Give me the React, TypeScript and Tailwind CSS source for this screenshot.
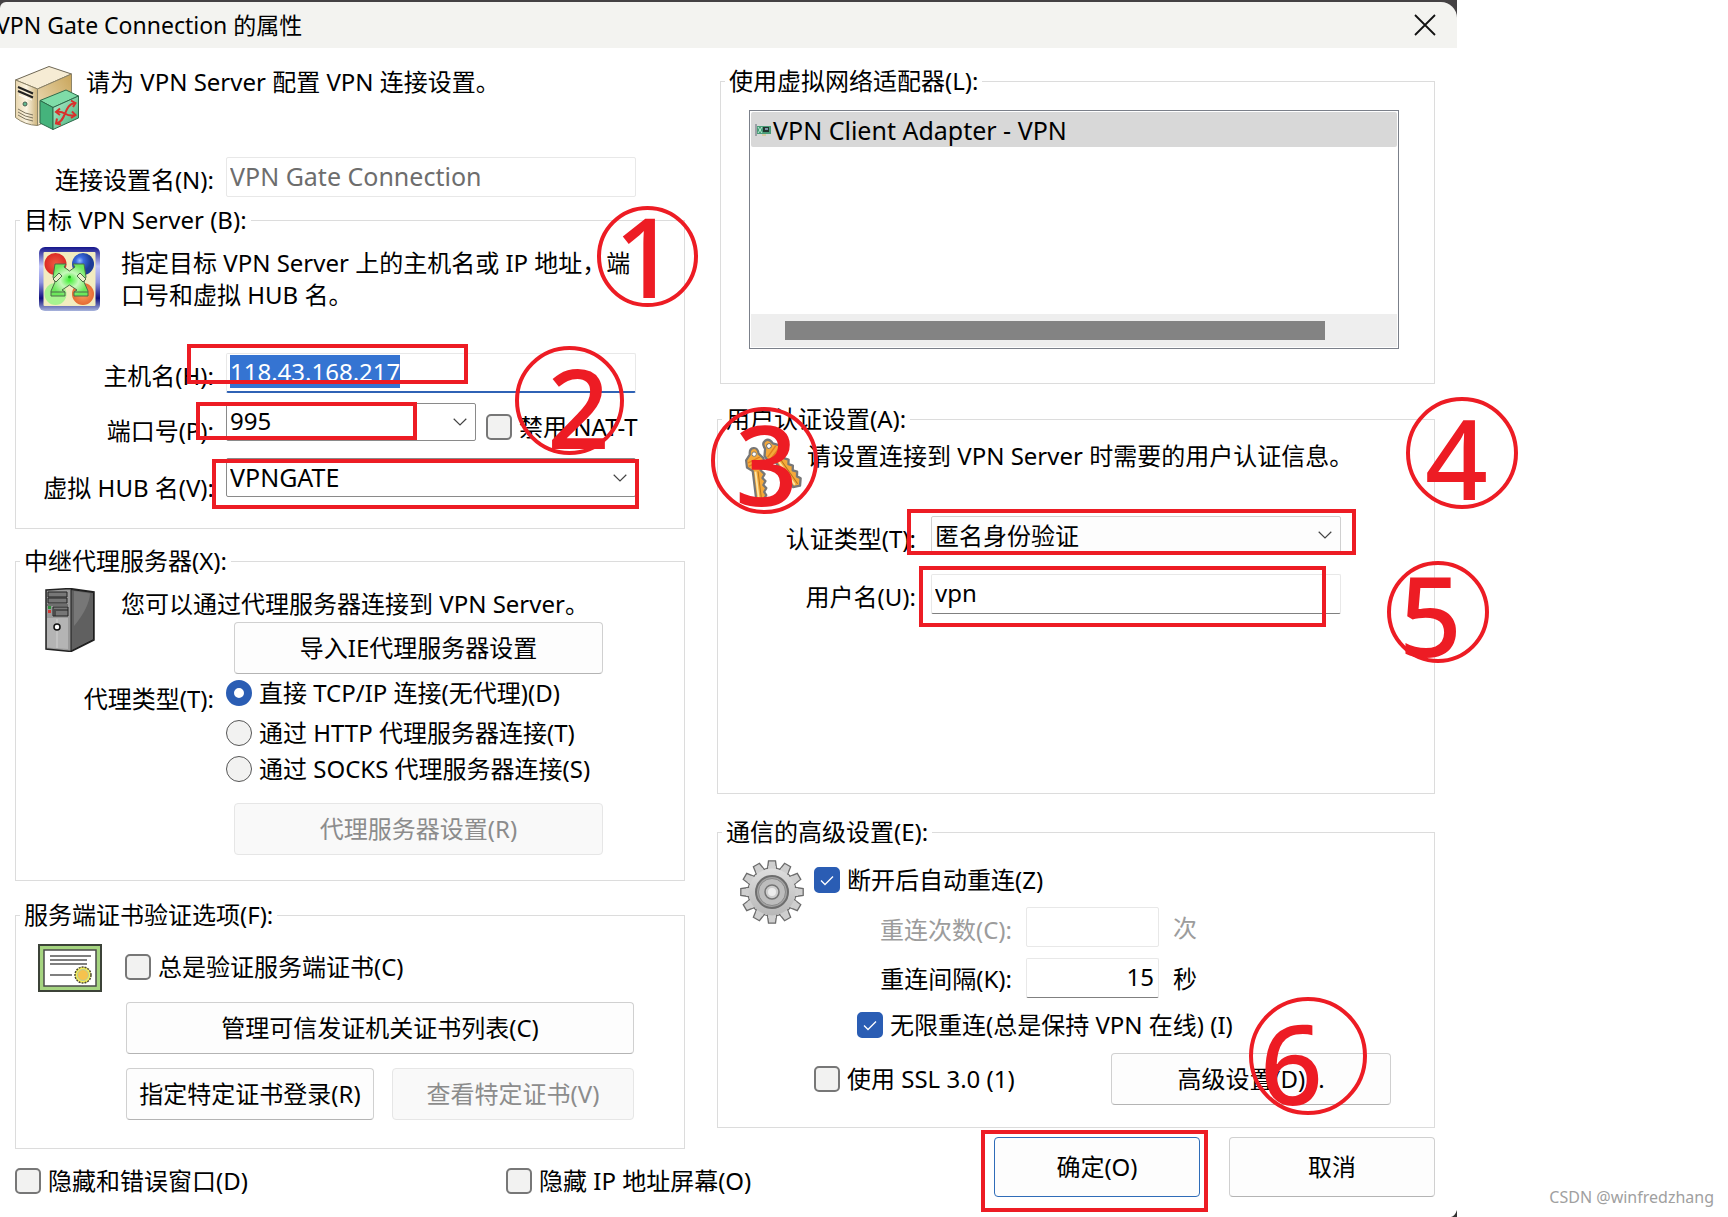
import { useEffect, useRef, useState } from "react";
import type { ReactNode } from "react";
import clsx from "clsx";

const DialogFont =
  "font-['Noto_Sans','Noto_Sans_CJK_SC',sans-serif] text-2xl leading-8 text-black";

interface GroupProps {
  title: string;
  className?: string;
  children: ReactNode;
}

function Group({ title, className, children }: GroupProps) {
  return (
    <fieldset className={clsx("min-w-0 border border-[#dcdcdc]", className)}>
      <legend className="ml-1 px-1 leading-8 whitespace-nowrap">{title}</legend>
      {children}
    </fieldset>
  );
}

interface CheckProps {
  label: string;
  defaultChecked?: boolean;
  className?: string;
}

function Check({ label, defaultChecked = false, className }: CheckProps) {
  return (
    <label className={clsx("flex h-[26px] items-center gap-[7px] whitespace-nowrap", className)}>
      <span className="grid size-[26px] shrink-0 place-items-center">
        <input
          type="checkbox"
          defaultChecked={defaultChecked}
          className="peer size-[26px] appearance-none rounded-[5px] border-2 border-[#777] bg-[#f2f2f1] [grid-area:1/1] checked:border-[#2a5db4] checked:bg-[#2a5db4]"
        />
        <svg
          viewBox="0 0 26 26"
          className="pointer-events-none size-[26px] opacity-0 [grid-area:1/1] peer-checked:opacity-100"
        >
          <path d="M7 13.5 11 17.5 19 9.5" fill="none" stroke="#fff" strokeWidth="1.3" />
        </svg>
      </span>
      {label}
    </label>
  );
}

interface RadioProps {
  label: string;
  checked: boolean;
  onChange: () => void;
  className?: string;
}

function Radio({ label, checked, onChange, className }: RadioProps) {
  return (
    <label className={clsx("flex h-[26px] items-center gap-[7px] whitespace-nowrap", className)}>
      <input
        type="radio"
        name="proxy"
        checked={checked}
        onChange={onChange}
        className="size-[26px] shrink-0 appearance-none rounded-full border border-[#555] bg-[#f2f2f1] checked:border-8 checked:border-[#2a5db4] checked:bg-white"
      />
      {label}
    </label>
  );
}

interface SelectProps {
  id: string;
  options: string[];
  className?: string;
  selectClassName?: string;
}

function Select({ id, options, className, selectClassName }: SelectProps) {
  return (
    <div className={clsx("relative", className)}>
      <select
        id={id}
        className={clsx(
          "block h-full w-full appearance-none rounded-xs border pl-[3px] leading-8 outline-none",
          selectClassName ?? "border-[#8a8a8a] bg-white pb-0.5",
        )}
      >
        {options.map((option) => (
          <option key={option}>{option}</option>
        ))}
      </select>
      <svg
        viewBox="0 0 14 8"
        className="pointer-events-none absolute top-1/2 right-[9px] h-2 w-3.5 -translate-y-1/2"
      >
        <path d="M.7.8 7 7 13.3.8" fill="none" stroke="#444" strokeWidth="1.2" />
      </svg>
    </div>
  );
}

interface PushButtonProps {
  children: ReactNode;
  disabled?: boolean;
  primary?: boolean;
  className?: string;
}

function PushButton({ children, disabled, primary, className }: PushButtonProps) {
  return (
    <button
      type="button"
      disabled={disabled}
      className={clsx(
        "rounded-[4px] border whitespace-nowrap",
        disabled && "border-[#e6e6e6] bg-[#f9f9f9] text-[#8c8c8c]",
        primary && "border-[#2f6cb8] bg-[#fdfdfd]",
        !disabled && !primary && "border-[#d0d0d0] border-b-[#b4b4b4] bg-[#fdfdfd]",
        className,
      )}
    >
      {children}
    </button>
  );
}

function ServerIcon() {
  return (
    <svg viewBox="0 0 64 64" className="size-16 shrink-0">
      <defs>
        <linearGradient id="case-front" x1="0" x2="1">
          <stop offset="0" stopColor="#e8d6ae" />
          <stop offset=".5" stopColor="#fbf4e2" />
          <stop offset="1" stopColor="#cdb37a" />
        </linearGradient>
        <linearGradient id="case-side" x1="0" x2="1" y1="1" y2="0">
          <stop offset="0" stopColor="#efe2c2" />
          <stop offset="1" stopColor="#c9a55a" />
        </linearGradient>
        <linearGradient id="box-front" x1="0" x2="1" y1="0" y2="1">
          <stop offset="0" stopColor="#b8f0d0" />
          <stop offset="1" stopColor="#3fae76" />
        </linearGradient>
      </defs>
      <path d="M.5 14 34 .5 56.5 8 22.5 23Z" fill="#f6ecd4" stroke="#6d6654" />
      <path d="M.5 14 22.5 23V59.5Q10 59 .5 51.5Z" fill="url(#case-front)" stroke="#8d8468" />
      <path d="M22.5 23 56.5 8V44L22.5 59.5Z" fill="url(#case-side)" stroke="#8d8468" />
      <path d="M3 21 18 27.5M3 25 18 31.5" stroke="#222" strokeWidth="2" />
      <path d="M4 29 17 34" stroke="#fff" />
      <circle cx="10" cy="38" r="2" fill="#5fb890" stroke="#4b6050" />
      <path
        d="M3 43Q10 48 18 49M3 46Q10 51 18 52M3 49Q10 54 18 55"
        fill="none"
        stroke="#7c745f"
      />
      <path d="M25 34.5 51 24 63.5 30 38 41.5Z" fill="#7fdca8" stroke="#2e6b4b" />
      <path d="M25 34.5 38 41.5V63.5L25 57Z" fill="#45b37c" stroke="#2e6b4b" />
      <path d="M38 41.5 63.5 30V52L38 63.5Z" fill="url(#box-front)" stroke="#2e6b4b" />
      <g stroke="#d9302c" strokeWidth="2" fill="none">
        <path d="M41 46C51 44 50 52 60 49M42 57C51 56 49 38 60 37" />
        <path d="M45 42.5 41 46 45 49M56 34.5 60.5 37 58 41M57 45.5 60.5 49 56 52M42 52.5 41 57.5 46 58.5" />
      </g>
    </svg>
  );
}

function HubIcon() {
  return (
    <svg viewBox="0 0 64 64" className="size-16 shrink-0">
      <defs>
        <linearGradient id="hub-frame" x1="0" x2="0" y1="0" y2="1">
          <stop offset="0" stopColor="#14148a" />
          <stop offset=".3" stopColor="#c4c8fa" />
          <stop offset=".55" stopColor="#8f94e0" />
          <stop offset=".8" stopColor="#10107e" />
          <stop offset="1" stopColor="#a8b4dc" />
        </linearGradient>
        <radialGradient id="hub-blue" cx=".35" cy=".35">
          <stop offset="0" stopColor="#9cc0ff" />
          <stop offset=".35" stopColor="#3a6ae0" />
          <stop offset="1" stopColor="#1c3c96" />
        </radialGradient>
        <radialGradient id="hub-red">
          <stop offset="0" stopColor="#ee5a44" />
          <stop offset="1" stopColor="#dc2a24" />
        </radialGradient>
        <radialGradient id="hub-orange">
          <stop offset="0" stopColor="#f8a060" />
          <stop offset="1" stopColor="#e66a34" />
        </radialGradient>
        <radialGradient id="hub-cross">
          <stop offset="0" stopColor="#3cf030" />
          <stop offset=".5" stopColor="#c8f8bc" />
          <stop offset="1" stopColor="#6ce85c" />
        </radialGradient>
      </defs>
      <rect width="61" height="64" rx="6" fill="url(#hub-frame)" />
      <rect x="4.5" y="5" width="52" height="54" rx="1" fill="#f2ecc0" />
      <circle cx="16.5" cy="17" r="11" fill="url(#hub-red)" />
      <circle cx="44" cy="17" r="11" fill="url(#hub-blue)" />
      <circle cx="16.5" cy="47" r="11" fill="#a8f490" />
      <circle cx="44" cy="47" r="11" fill="url(#hub-orange)" />
      <path
        d="M16 17H27L25 20 30.5 24 36 20 34 17H45L47 30 45 35 49 44V49H35V45L38 43 30.5 38 23 43 26 45V49H12V44L16 35 14 30Z"
        fill="url(#hub-cross)"
        stroke="#4d6b48"
      />
      <path
        d="M14 32 20 26 23 29 17 35ZM38 29 41 26 47 32 44 35Z"
        fill="#e8f0c8"
        stroke="#4d6b48"
      />
      <path d="M12 45H26M35 45H49" stroke="#4d6b48" />
      <circle cx="30.5" cy="30" r="1.5" fill="#1fae1c" />
    </svg>
  );
}

function TowerIcon() {
  return (
    <svg viewBox="0 0 64 64" className="size-16 shrink-0">
      <path d="M7 2 31 .5 55 4V52L32 63.5 7 61Z" fill="#9a9a9a" stroke="#222" strokeWidth="1.5" />
      <path d="M32 1.5 54.5 4.5V51.5L32 63Z" fill="#606060" stroke="#1c1c1c" />
      <path d="M35 3 51 5.5Q50 20 35 38Z" fill="#777" />
      <path d="M8 30H29V61L8 59.5Z" fill="#b4b4b4" />
      <path d="M18 31V60" stroke="#d0d0d0" />
      <path d="M9 4H28V9H9ZM9 10H28V15H9Z" fill="#777" stroke="#222" />
      <path d="M8 17H29" stroke="#444" />
      <path d="M14 19H29V28H14ZM17 22H29M16 28V21" fill="#777" stroke="#222" />
      <rect x="9" y="18" width="3" height="3" fill="#2f8f3c" />
      <rect x="9" y="22" width="3" height="3" fill="#d43a34" />
      <circle cx="18" cy="39" r="3" fill="#fff" stroke="#111" strokeWidth="1.5" />
    </svg>
  );
}

function CertificateIcon() {
  return (
    <svg viewBox="0 0 64 48" className="h-12 w-16 shrink-0">
      <rect x="1" y="1" width="62" height="46" fill="#a5d480" stroke="#3c4338" strokeWidth="2" />
      <rect x="6" y="6" width="52" height="36" fill="#fff" stroke="#4a4a4a" strokeWidth="1.5" />
      <path d="M12 12H53M12 16H49M12 20H49M12 31H34" stroke="#555" strokeWidth="1.3" />
      <circle cx="45" cy="31" r="8" fill="#f4ee5a" stroke="#4c4a30" strokeWidth="1.5" strokeDasharray="2 1" />
      <circle cx="45" cy="31" r="5.5" fill="#f6c24e" stroke="#b8cc9c" />
    </svg>
  );
}

function KeysIcon() {
  const key = (
    <>
      <path
        d="M-10-11-5-17Q-5-24 0-24T5-17L10-11V-3L5 2 9 7 6 11 9 15 6 19 9 23 6 27 8 31 3 37-4 34V2L-10-3Z"
        fill="#f5a93a"
        stroke="#777"
        strokeWidth="2.5"
        strokeLinejoin="round"
      />
      <path d="M-8-8 6-13M-8-4 8-9" stroke="#e07f1e" strokeWidth="1.5" />
      <path d="M-1 3V33" stroke="#fde7a8" strokeWidth="2" />
      <path d="M2 3V34" stroke="#b0701c" />
      <circle cy="-17" r="2.5" fill="#fff" stroke="#777" />
    </>
  );
  return (
    <svg viewBox="0 0 64 64" className="size-16 shrink-0">
      <g transform="translate(38 21) rotate(-35) scale(.93)">{key}</g>
      <g transform="translate(16 31) rotate(-7) scale(.88)">{key}</g>
    </svg>
  );
}

function GearIcon() {
  const teeth = Array.from({ length: 12 }, (_, i) => i * 30);
  return (
    <svg viewBox="0 0 64 64" className="size-16 shrink-0">
      <defs>
        <linearGradient id="gear-metal" x1="0" x2="0" y1="0" y2="1">
          <stop offset="0" stopColor="#dedede" />
          <stop offset="1" stopColor="#b8b8b8" />
        </linearGradient>
      </defs>
      {teeth.map((angle) => (
        <path
          key={angle}
          d="M27 12 28.5.8H35.5L37 12"
          fill="#cfcfcf"
          stroke="#6c6c6c"
          strokeWidth="1.3"
          transform={`rotate(${angle} 32 32)`}
        />
      ))}
      <circle cx="32" cy="32" r="24" fill="none" stroke="#6c6c6c" strokeWidth="1.3" />
      {teeth.map((angle) => (
        <path
          key={angle}
          d="M28.3 6H35.7L36.6 13H27.4Z"
          fill="#cfcfcf"
          transform={`rotate(${angle} 32 32)`}
        />
      ))}
      <circle cx="32" cy="32" r="23.4" fill="url(#gear-metal)" />
      <circle cx="32" cy="32" r="16" fill="#a4a4a4" stroke="#6e6e6e" strokeWidth="2" />
      <circle cx="32" cy="32" r="13.5" fill="#bdbdbd" stroke="#8a8a8a" />
      <circle cx="32" cy="32" r="7" fill="#cdcdcd" stroke="#747474" strokeWidth="1.5" />
      <circle cx="32" cy="32" r="4" fill="#ececec" />
    </svg>
  );
}

function AdapterIcon() {
  return (
    <svg viewBox="0 0 16 16" className="size-4 shrink-0">
      <path d="M1 2V14" stroke="#8a8f96" strokeWidth="1.5" />
      <path d="M2 4H16V12H2Z" fill="#4a9c78" />
      <path d="M3 5 7 11M7 5 3 11" stroke="#b8ecd4" />
      <path d="M8 5H14V10H8Z" fill="#22352e" />
      <path d="M10 7H13" stroke="#9fb4d8" strokeWidth="1.5" />
      <path d="M7 13H11" stroke="#d8c890" strokeWidth="1.5" />
    </svg>
  );
}

// Highlight frames and numbered marks drawn over the dialog
function Callouts() {
  const frame = "absolute border-4 border-[#ed1c24]";
  const ring = "absolute rounded-full border-4 border-[#ed1c24]";
  const digit = "absolute text-[110px] leading-none font-medium text-[#ed1c24]";
  return (
    <div className="pointer-events-none absolute inset-0">
      <div className={clsx(frame, "top-[344px] left-[187px] h-10 w-[281px]")} />
      <div className={clsx(frame, "top-[402px] left-[196px] h-[38px] w-[221px]")} />
      <div className={clsx(frame, "top-[459px] left-[212px] h-[50px] w-[427px]")} />
      <div className={clsx(frame, "top-[509px] left-[907px] h-[46px] w-[449px]")} />
      <div className={clsx(frame, "top-[566px] left-[919px] h-[61px] w-[407px]")} />
      <div className={clsx(frame, "top-[1130px] left-[981px] h-[82px] w-[227px]")} />

      <div className={clsx(ring, "top-[206px] left-[597px] size-[101px]")} />
      <div className={clsx(ring, "top-[346px] left-[515px] size-[109px]")} />
      <div className={clsx(ring, "top-[407px] left-[711px] size-[107px]")} />
      <div className={clsx(ring, "top-[397px] left-[1406px] size-28")} />
      <div className={clsx(ring, "top-[561px] left-[1387px] size-[102px]")} />
      <div className={clsx(ring, "top-[997px] left-[1249px] size-[118px]")} />

      <span className={clsx(digit, "top-[200px] left-[614px]")}>1</span>
      <span className={clsx(digit, "top-[351px] left-[547px]")}>2</span>
      <span className={clsx(digit, "top-[408px] left-[735px]")}>3</span>
      <span className={clsx(digit, "top-[402px] left-[1425px]")}>4</span>
      <span className={clsx(digit, "top-[559px] left-[1399px]")}>5</span>
      <span className={clsx(digit, "top-[1007px] left-[1260px]")}>6</span>
    </div>
  );
}

const PROXY_TYPES = [
  { label: "直接 TCP/IP 连接(无代理)(D)", className: "" },
  { label: "通过 HTTP 代理服务器连接(T)", className: "mt-3.5" },
  { label: "通过 SOCKS 代理服务器连接(S)", className: "mt-2.5" },
];

const fieldLabel = "w-[198px] shrink-0 text-right whitespace-nowrap";
const textBox = "min-w-0 rounded-xs border border-[#e8e8e8] bg-white pb-[3px] pl-[3px] outline-none";

export default function App() {
  const [proxyType, setProxyType] = useState(0);
  const hostRef = useRef<HTMLInputElement>(null);

  useEffect(() => {
    hostRef.current?.select();
  }, []);

  return (
    <div className={clsx("flex min-h-screen bg-white", DialogFont)}>
      <main className="relative w-full max-w-[1457px]">
        <div className="bg-[#444143] pt-0.5">
          <header className="flex h-[46px] items-center justify-between rounded-tl-md rounded-tr-2xl bg-[#f3f3f0] pr-5">
            <h1 className="-ml-1 text-[23px] whitespace-nowrap">
              VPN Gate Connection 的属性
            </h1>
            <button type="button" aria-label="关闭">
              <svg viewBox="0 0 24 24" className="size-6">
                <path d="M2 2 22 22M22 2 2 22" stroke="#111" strokeWidth="1.8" />
              </svg>
            </button>
          </header>
        </div>

        <div className="grid grid-cols-[670fr_718fr] gap-8 pr-[22px] pb-5 pl-[15px]">
          <div className="flex min-w-0 flex-col">
            <div className="mt-[18px] flex gap-[7px]">
              <ServerIcon />
              <p>请为 VPN Server 配置 VPN 连接设置。</p>
            </div>
            <div className="mt-[27px] flex h-10 gap-3 pr-[49px]">
              <label htmlFor="setting-name" className="w-[199px] shrink-0 pt-[7px] text-right">
                连接设置名(N):
              </label>
              <input
                id="setting-name"
                disabled
                defaultValue="VPN Gate Connection"
                className={clsx(textBox, "flex-1 text-[25px] text-[#6d6d6d]")}
              />
            </div>

            <Group title="目标 VPN Server (B):" className="mt-[7px] pb-[22px]">
              <div className="mt-[11px] flex gap-[18px] pr-10 pl-[23px]">
                <HubIcon />
                <p>指定目标 VPN Server 上的主机名或 IP 地址，端口号和虚拟 HUB 名。</p>
              </div>
              <div className="mt-[42px] flex gap-3 pr-12">
                <label htmlFor="host" className={clsx(fieldLabel, "pt-[7px]")}>
                  主机名(H):
                </label>
                <input
                  id="host"
                  ref={hostRef}
                  defaultValue="118.43.168.217"
                  className={clsx(
                    textBox,
                    "h-10 flex-1 border-b-2 border-b-[#2f62b5] selection:bg-[#3574d2] selection:text-white",
                  )}
                />
              </div>
              <div className="mt-2.5 flex gap-3">
                <label htmlFor="port" className={clsx(fieldLabel, "pt-3")}>
                  端口号(P):
                </label>
                <div className="flex gap-2.5">
                  <Select id="port" options={["995"]} className="h-[38px] w-[250px]" />
                  <Check label="禁用 NAT-T" className="mt-[11px]" />
                </div>
              </div>
              <div className="mt-[11px] flex gap-3 pr-12">
                <label htmlFor="hub" className={clsx(fieldLabel, "pt-3.5 pb-0.5")}>
                  虚拟 HUB 名(V):
                </label>
                <Select
                  id="hub"
                  options={["VPNGATE"]}
                  className="h-[39px] flex-1"
                  selectClassName="border-[#8a8a8a] bg-white pb-0.5 text-[25px]"
                />
              </div>
            </Group>

            <Group title="中继代理服务器(X):" className="mt-4 pb-[25px]">
              <div className="mt-[11px] flex gap-[18px] pr-[81px] pl-[23px]">
                <TowerIcon />
                <div className="flex flex-1 flex-col">
                  <p className="whitespace-nowrap">您可以通过代理服务器连接到 VPN Server。</p>
                  <PushButton className="mt-0.5 ml-[113px] h-[52px]">导入IE代理服务器设置</PushButton>
                </div>
              </div>
              <div role="radiogroup" aria-label="代理类型" className="mt-1.5 flex gap-3">
                <span className={clsx(fieldLabel, "pt-[3px]")}>代理类型(T):</span>
                <div>
                  {PROXY_TYPES.map((type, i) => (
                    <Radio
                      key={type.label}
                      label={type.label}
                      className={type.className}
                      checked={proxyType === i}
                      onChange={() => setProxyType(i)}
                    />
                  ))}
                </div>
              </div>
              <div className="mt-[21px] flex pr-[81px] pl-[218px]">
                <PushButton disabled className="h-[52px] flex-1">
                  代理服务器设置(R)
                </PushButton>
              </div>
            </Group>

            <Group title="服务端证书验证选项(F):" className="mt-[18px] pb-7">
              <div className="mt-[13px] flex gap-[23px] pl-[22px]">
                <CertificateIcon />
                <Check label="总是验证服务端证书(C)" className="mt-2.5" />
              </div>
              <div className="mt-2.5 flex flex-col gap-3.5 pr-[50px] pl-[110px]">
                <PushButton className="h-[52px]">管理可信发证机关证书列表(C)</PushButton>
                <div className="grid grid-cols-[248fr_242fr] gap-[18px]">
                  <PushButton className="h-[52px]">指定特定证书登录(R)</PushButton>
                  <PushButton disabled className="h-[52px]">
                    查看特定证书(V)
                  </PushButton>
                </div>
              </div>
            </Group>

            <div className="mt-[19px] flex">
              <Check label="隐藏和错误窗口(D)" className="w-[491px] shrink-0" />
              <Check label="隐藏 IP 地址屏幕(O)" />
            </div>
          </div>

          <div className="flex min-w-0 flex-col">
            <Group title="使用虚拟网络适配器(L):" className="mt-[17px] ml-[3px] pb-[34px]">
              <div className="mt-[13px] mr-[35px] ml-7 flex h-[239px] flex-col border border-[#7b808a] p-px">
                <ul className="flex-1">
                  <li className="flex h-[35px] items-center gap-0.5 rounded-xs bg-[#d8d8d8] pl-1 text-[25px]">
                    <AdapterIcon />
                    VPN Client Adapter - VPN
                  </li>
                </ul>
                <div className="h-[33px] bg-[#eee] pt-[7px] pr-[72px] pl-[34px]">
                  <div className="h-[19px] bg-[#838383]" />
                </div>
              </div>
            </Group>

            <Group title="用户认证设置(A):" className="mt-[19px] pb-[179px]">
              <div className="mt-[3px] flex gap-[3px] pl-[22px]">
                <KeysIcon />
                <p className="pt-0.5 whitespace-nowrap">
                  请设置连接到 VPN Server 时需要的用户认证信息。
                </p>
              </div>
              <div className="mt-3.5 flex gap-[15px] pr-[93px]">
                <label htmlFor="auth" className={clsx(fieldLabel, "pt-[7px] pb-px")}>
                  认证类型(T):
                </label>
                <Select
                  id="auth"
                  options={["匿名身份验证"]}
                  className="h-[38px] flex-1"
                  selectClassName="border-[#d0d0d0] bg-[#fdfdfd] pt-0.5"
                />
              </div>
              <div className="mt-[18px] flex gap-[15px] pr-[93px]">
                <label htmlFor="user" className={clsx(fieldLabel, "pt-[7px]")}>
                  用户名(U):
                </label>
                <input
                  id="user"
                  defaultValue="vpn"
                  className={clsx(textBox, "h-10 flex-1 border-b-[#808080]")}
                />
              </div>
            </Group>

            <Group title="通信的高级设置(E):" className="mt-[22px] pb-[22px]">
              <div className="mt-3 flex gap-2.5 pl-[22px]">
                <GearIcon />
                <div className="flex-1 pt-[7px]">
                  <Check label="断开后自动重连(Z)" defaultChecked />
                  <div className="mt-3.5 flex h-10 gap-3.5 text-[#9c9c9c]">
                    <label htmlFor="retries" className={clsx(fieldLabel, "pt-[7px]")}>
                      重连次数(C):
                    </label>
                    <input id="retries" disabled className={clsx(textBox, "w-[133px]")} />
                    <span className="pt-[5px]">次</span>
                  </div>
                  <div className="mt-[11px] flex h-10 gap-3.5">
                    <label htmlFor="interval" className={clsx(fieldLabel, "pt-[5px]")}>
                      重连间隔(K):
                    </label>
                    <input
                      id="interval"
                      defaultValue="15"
                      className={clsx(textBox, "w-[133px] border-b-[#808080] pr-1 text-right")}
                    />
                    <span className="pt-[5px]">秒</span>
                  </div>
                  <Check
                    label="无限重连(总是保持 VPN 在线) (I)"
                    defaultChecked
                    className="mt-3.5 ml-[43px]"
                  />
                  <div className="mt-[15px] flex items-center justify-between pr-[43px]">
                    <Check label="使用 SSL 3.0 (1)" />
                    <PushButton className="h-[52px] w-[280px]">高级设置(D)...</PushButton>
                  </div>
                </div>
              </div>
            </Group>

            <div className="mt-[9px] flex justify-end gap-[29px]">
              <PushButton primary className="h-[60px] w-[206px]">
                确定(O)
              </PushButton>
              <PushButton className="h-[60px] w-[206px]">取消</PushButton>
            </div>
          </div>
        </div>
        <svg viewBox="0 0 6 7" className="absolute right-0 bottom-0 h-[7px] w-1.5">
          <path d="M6 0V7H0Q4 6 6 0Z" fill="#333" />
        </svg>
        <Callouts />
      </main>

      <aside className="flex flex-1 items-end justify-end pr-3.5 pb-1.5">
        <span className="text-base leading-7 whitespace-nowrap text-[#a0a0a0]">CSDN @winfredzhang</span>
      </aside>
    </div>
  );
}
